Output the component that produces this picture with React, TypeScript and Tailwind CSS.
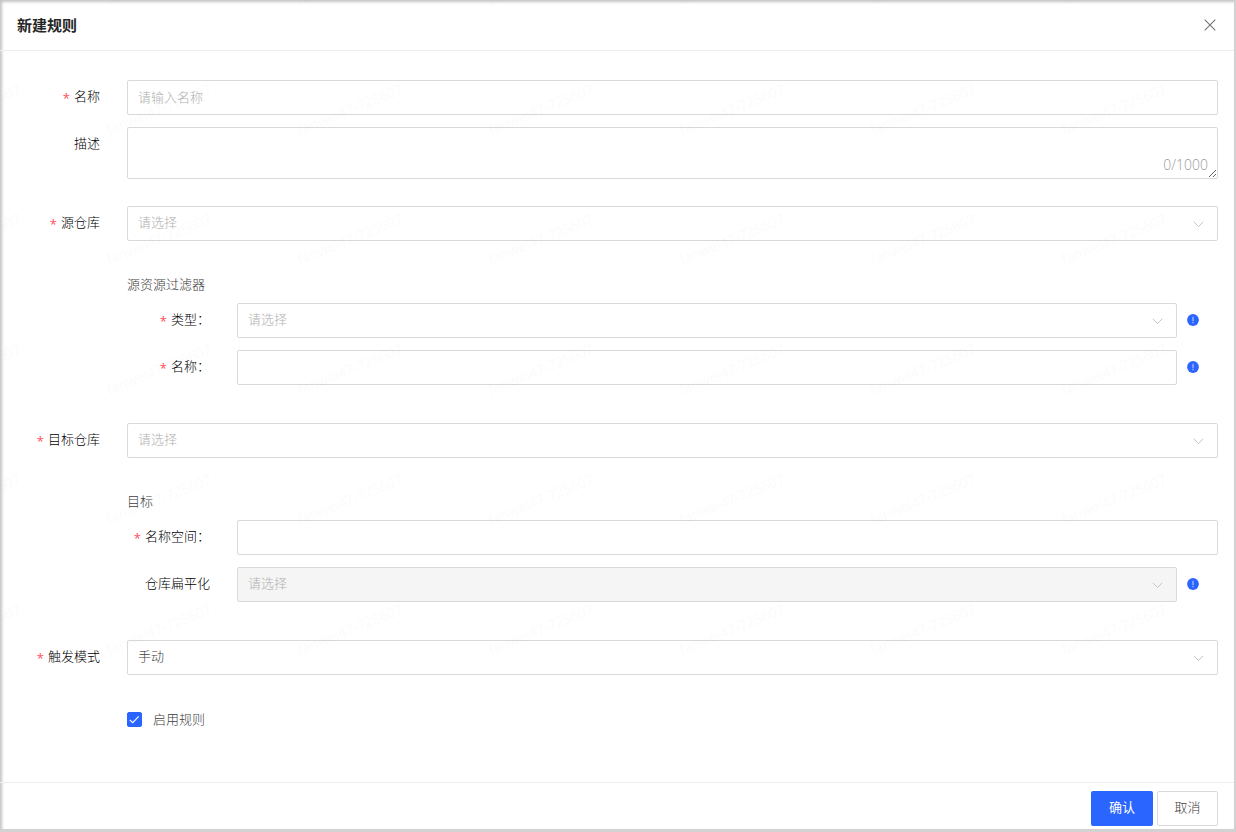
import { clsx } from "clsx";
import React, { useState } from "react";

interface FieldProps {
  id: string;
  label: string;
  required?: boolean;
  nested?: boolean;
  hint?: string;
  className?: string;
  children: React.ReactNode;
}

const control =
  "block h-[35px] w-full rounded-xs border border-[#d9d9d9] bg-white px-[10px] pb-0.5 text-[13px] outline-none placeholder:text-[#b0b0b0] focus:border-[#2b65ff]";

function HintButton({ text }: { text: string }) {
  return (
    <button type="button" aria-label={text} className="ml-[10px] mr-[19px] shrink-0">
      <svg width="12" height="12" viewBox="0 0 12 12">
        <circle cx="6" cy="6" r="5.9" fill="#2b65ff" />
        <path d="M6 2.8v4.4M6 8v1.2" stroke="#b9ccff" strokeWidth="1.1" />
      </svg>
    </button>
  );
}

function Field({ id, label, required, nested, hint, className, children }: FieldProps) {
  return (
    <div className={clsx("flex items-start", className)}>
      <label
        htmlFor={id}
        className={clsx(
          "shrink-0 pr-[27px] text-right leading-8 text-black",
          nested ? "w-[110px]" : "w-[127px]",
        )}
      >
        {required && <span className="mr-1 align-[-2px] font-normal text-[#ff4d5b]">*</span>}
        {label}
      </label>
      <div className="relative min-w-0 flex-1">{children}</div>
      {hint && (
        <div className="flex h-[34px] items-center">
          <HintButton text={hint} />
        </div>
      )}
    </div>
  );
}

interface SelectProps extends React.ComponentProps<"select"> {
  options: string[];
  placeholder?: string;
}

function Select({ options, placeholder, disabled, ...props }: SelectProps) {
  const [value, setValue] = useState(placeholder ? "" : options[0]);

  return (
    <>
      <select
        value={value}
        disabled={disabled}
        onChange={(e) => setValue(e.target.value)}
        className={clsx(
          control,
          "appearance-none pr-8 disabled:bg-[#f5f5f5] disabled:opacity-100",
          value ? "text-[#404040]" : "text-[#b0b0b0]",
        )}
        {...props}
      >
        {placeholder && <option value="">{placeholder}</option>}
        {options.map((option) => (
          <option key={option} value={option}>
            {option}
          </option>
        ))}
      </select>
      <svg
        className="pointer-events-none absolute right-[14px] top-[15px]"
        width="11"
        height="7"
        viewBox="0 0 11 7"
        fill="none"
        stroke="#c4c4c4"
      >
        <path d="M0.8 0.8 5.5 5.6 10.2 0.8" />
      </svg>
    </>
  );
}

function Watermark() {
  return (
    <svg
      aria-hidden="true"
      className="pointer-events-none absolute inset-x-0 top-0 h-[670px] w-full"
    >
      <defs>
        <pattern id="mark" x="100" y="10" width="191" height="130" patternUnits="userSpaceOnUse">
          <text
            x="9"
            y="125"
            transform="rotate(-22 9 125)"
            fontSize="14"
            fill="#000"
            fillOpacity="0.014"
          >
            fanwei47-725607
          </text>
        </pattern>
      </defs>
      <rect width="100%" height="100%" fill="url(#mark)" />
    </svg>
  );
}

export default function App() {
  const [description, setDescription] = useState("");
  const [enabled, setEnabled] = useState(true);

  return (
    <div className="flex min-h-screen bg-[#d2d2d2] pr-0.5 pb-[3px] font-['Open_Sans','Noto_Sans_CJK_SC',sans-serif] text-[13px]">
      <form
        onSubmit={(e) => e.preventDefault()}
        className="relative flex min-w-0 flex-1 flex-col bg-white shadow-[inset_2px_2px_3px_#c4c4c4]"
      >
        <header className="flex h-[51px] items-center justify-between border-b border-[#ededed] pr-[15px] pl-[17px]">
          <h1 className="text-[15px] font-bold text-[#262626]">新建规则</h1>
          <button type="button" aria-label="关闭" className="p-[3px]">
            <svg width="12" height="12" viewBox="0 0 12 12" stroke="#737373" strokeWidth="1.1">
              <path d="M0.7 0.7 11.3 11.3M11.3 0.7 0.7 11.3" />
            </svg>
          </button>
        </header>

        <main className="flex-1 pt-[29px] pr-4 pb-6 font-light">
          <Field id="name" label="名称" required className="mb-3">
            <input id="name" className={control} placeholder="请输入名称" />
          </Field>
          <Field id="description" label="描述" className="mb-[27px]">
            <textarea
              id="description"
              maxLength={1000}
              value={description}
              onChange={(e) => setDescription(e.target.value)}
              className="block h-[52px] w-full resize-y rounded-xs border border-[#d9d9d9] px-[10px] py-1 outline-none"
            />
            <span className="pointer-events-none absolute right-[10px] bottom-1 text-sm leading-5 text-[#9a9a9a]">
              {description.length}/1000
            </span>
          </Field>

          <Field id="source" label="源仓库" required>
            <Select id="source" placeholder="请选择" options={["默认仓库"]} />
          </Field>

          <section className="mt-[33px] mb-[38px] pl-[127px]">
            <h2 className="mb-[9px] leading-5 text-[#404040]">源资源过滤器</h2>
            <Field id="type" label="类型：" required nested hint="类型说明" className="mb-3">
              <Select id="type" placeholder="请选择" options={["镜像"]} />
            </Field>
            <Field id="filter-name" label="名称：" required nested hint="名称说明">
              <input id="filter-name" className={control} />
            </Field>
          </section>

          <Field id="target" label="目标仓库" required>
            <Select id="target" placeholder="请选择" options={["默认仓库"]} />
          </Field>

          <section className="mt-[33px] mb-[38px] pl-[127px]">
            <h2 className="mb-[9px] leading-5 text-[#404040]">目标</h2>
            <Field id="namespace" label="名称空间：" required nested className="mb-3">
              <input id="namespace" className={control} />
            </Field>
            <Field id="flatten" label="仓库扁平化" nested hint="仓库扁平化说明">
              <Select id="flatten" placeholder="请选择" options={[]} disabled />
            </Field>
          </section>

          <Field id="trigger" label="触发模式" required>
            <Select id="trigger" options={["手动", "定时"]} />
          </Field>

          <label className="mt-[34px] ml-[127px] flex h-[21px] w-fit items-center gap-[11px] text-[#404040]">
            <span className="relative flex">
              <input
                type="checkbox"
                checked={enabled}
                onChange={(e) => setEnabled(e.target.checked)}
                className="size-[15px] appearance-none rounded-xs border border-[#d9d9d9] checked:border-[#2b65ff] checked:bg-[#2b65ff]"
              />
              {enabled && (
                <svg
                  className="pointer-events-none absolute inset-0"
                  width="15"
                  height="15"
                  viewBox="0 0 15 15"
                  fill="none"
                  stroke="#fff"
                  strokeWidth="1.1"
                >
                  <path d="M2.8 7.8 5.7 10.6 11.7 4.3" />
                </svg>
              )}
            </span>
            启用规则
          </label>
        </main>

        <footer className="flex justify-end gap-1 border-t border-[#ededed] pt-2 pr-4 pb-[3px]">
          <button
            type="submit"
            className="h-[35px] w-[62px] rounded-xs bg-[#2b65ff] pb-0.5 text-white"
          >
            确认
          </button>
          <button
            type="button"
            className="h-[35px] w-[61px] rounded-xs border border-[#d9d9d9] bg-white pb-0.5 font-light text-[#404040]"
          >
            取消
          </button>
        </footer>
        <Watermark />
      </form>
    </div>
  );
}
